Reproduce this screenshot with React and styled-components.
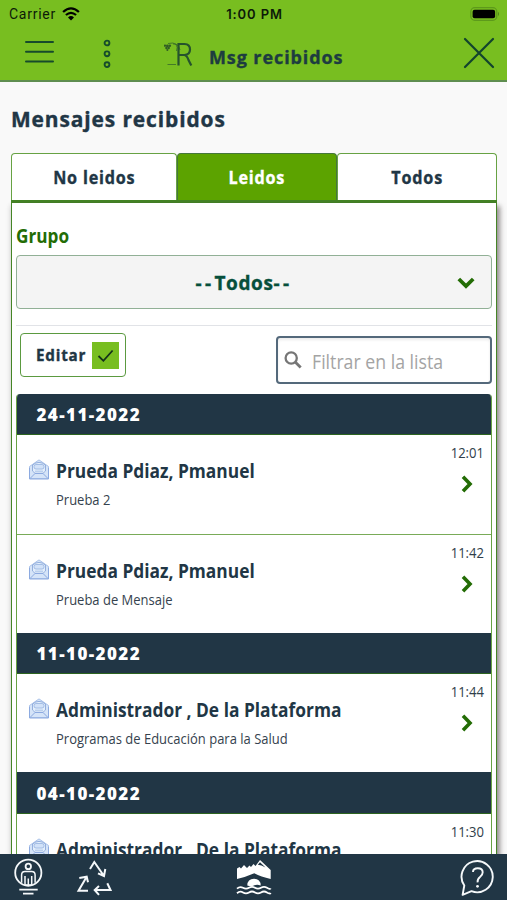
import React from "react";
import styled, { createGlobalStyle } from "styled-components";

const GlobalStyle = createGlobalStyle`
  * { box-sizing: border-box; }
  html, body { margin: 0; padding: 0; overflow: hidden; }
  body { font-family: "Open Sans", "Noto Sans", sans-serif; color: #213645; }
  button, input { font-family: inherit; color: inherit; margin: 0; }
`;

const Screen = styled.div`
  width: 507px;
  height: 900px;
  display: flex;
  flex-direction: column;
  overflow: hidden;
  background: #f9f9f9;
`;

/* Narrowed lettering, squeezed towards its starting edge */
const Narrow = styled.span`
  display: inline-block;
  white-space: nowrap;
  transform: scaleX(${(p) => p.$by});
  transform-origin: ${(p) => p.$from || "left"} center;
`;

const Header = styled.header`
  flex: none;
  height: 82px;
  background: #78be20;
  border-bottom: 2px solid #5f8e50;
`;

const StatusBar = styled.div`
  display: grid;
  grid-template-columns: 1fr auto 1fr;
  align-items: center;
  height: 28px;
  padding: 0 7px 0 9px;
  color: #0c1a08;
`;

const Carrier = styled.div`
  display: flex;
  align-items: center;
  gap: 6px;
  font-family: Roboto, sans-serif;
  font-size: 14px;
  letter-spacing: 0.75px;
`;

const Clock = styled.div`
  font-family: Inter, sans-serif;
  font-weight: 600;
  font-size: 13px;
  letter-spacing: 0.9px;
`;

const BatterySlot = styled.div`
  display: flex;
  justify-content: flex-end;
`;

const NavBar = styled.div`
  display: flex;
  align-items: center;
  height: 52px;
  padding: 0 11px 0 23px;
`;

const IconButton = styled.button`
  display: flex;
  padding: 0 0 ${(p) => p.$lift || "0"};
  border: 0;
  background: none;
  margin-left: ${(p) => p.$left || "0"};
`;

const Brand = styled.div`
  display: flex;
  align-items: center;
  margin-left: 53px;
  gap: 13px;
`;

const BrandTitle = styled.h1`
  margin: 5px 0 0;
  font-size: 18px;
  line-height: 24px;
  font-weight: 700;
  letter-spacing: 0.9px;
  -webkit-text-stroke: 0.35px;
  color: #1d3c40;
`;

const Content = styled.main`
  flex: 1;
  min-height: 0;
  overflow: hidden;
  padding: 0 10px 0 11px;
`;

const PageTitle = styled.h2`
  margin: 0;
  height: 71px;
  padding-top: 20px;
  font-size: 22px;
  line-height: 32px;
  font-weight: 700;
  letter-spacing: 0.95px;
  -webkit-text-stroke: 0.4px;
`;

const Tabs = styled.div`
  display: grid;
  grid-template-columns: 166px 160px 1fr;
  height: 50px;
  border-bottom: 3px solid #458526;
`;

const Tab = styled.button`
  border: 1.5px solid ${(p) => (p.$active ? "#45773a" : "#67a243")};
  border-bottom: 0;
  border-radius: 4px 4px 0 0;
  padding: 1px 0 0;
  background: ${(p) => (p.$active ? "#5ca300" : "#fff")};
  color: ${(p) => (p.$active ? "#fff" : "#213645")};
  font-size: 17px;
  font-weight: 700;
  letter-spacing: 0.85px;
  -webkit-text-stroke: 0.35px;
`;

const Panel = styled.section`
  height: 800px;
  padding: 18px 4px 0;
  background: #fff;
  border: solid #458526;
  border-width: 0 1.5px;
  box-shadow: 3px 3px 5px rgba(70, 60, 60, 0.55), -1px 2px 5px rgba(0, 0, 0, 0.1);
`;

const FieldLabel = styled.div`
  height: 34px;
  padding-top: 2px;
  font-size: 19px;
  line-height: 26px;
  font-weight: 700;
  color: #236c05;
`;

const SelectBox = styled.button`
  display: flex;
  align-items: center;
  width: 100%;
  height: 54px;
  padding: 1px 16px 0 14px;
  border: 1.5px solid #91b096;
  border-radius: 4px;
  background: #f4f4f4;
`;

const SelectValue = styled.span`
  flex: 1;
  text-align: center;
  font-size: 19px;
  font-weight: 700;
  letter-spacing: 0.6px;
  -webkit-text-stroke: 0.35px;
  color: #064f3b;
`;

const Dashes = styled.span`
  letter-spacing: 3.4px;
`;

const Tools = styled.div`
  display: flex;
  align-items: flex-start;
  justify-content: space-between;
  margin-top: 16px;
  height: 69px;
  padding: 7px 0 0 4px;
  border-top: 1.5px solid #e1e3e7;
`;

const EditButton = styled.button`
  display: flex;
  align-items: center;
  justify-content: space-between;
  width: 106px;
  height: 44px;
  padding: 0 6px 0 15px;
  border: 1.5px solid #5b9a40;
  border-radius: 4px;
  background: #fff;
  font-size: 16px;
  font-weight: 700;
  letter-spacing: 0.85px;
  -webkit-text-stroke: 0.35px;
`;

const CheckMark = styled.span`
  display: flex;
  width: 27px;
  height: 27px;
  margin-left: -6px;
  background: #78be20;
`;

const SearchField = styled.label`
  display: flex;
  align-items: center;
  width: 216px;
  height: 48px;
  margin-top: 3px;
  padding-left: 6px;
  gap: 10px;
  border: 2px solid #54697b;
  border-radius: 4px;
  background: #fff;
  box-shadow: inset 0 2px 3px rgba(0, 0, 0, 0.08);
`;

const SearchInput = styled.input`
  width: 170px;
  border: 0;
  padding: 2px 0 0;
  outline: 0;
  background: transparent;
  font-size: 20px;
  transform: scaleX(0.885);
  transform-origin: left center;
  &::placeholder { color: #a4a4a4; opacity: 1; }
`;

const MessageList = styled.div`
  border: solid #67a243;
  border-width: 0 1.5px;
  border-radius: 4px 4px 0 0;
  overflow: hidden;
`;

const DateHeader = styled.h3`
  margin: 0 -1.5px;
  height: 41.4px;
  padding: 1px 0 0 21px;
  display: flex;
  align-items: center;
  background: #213645;
  border-bottom: 1.5px solid #2d6420;
  color: #fff;
  font-size: 17px;
  font-weight: 800;
  letter-spacing: 1.4px;
`;

const Message = styled.article`
  display: grid;
  grid-template-columns: 22px 1fr 40px;
  column-gap: 5px;
  height: ${(p) => (p.$last ? "98px" : "99.6px")};
  padding: 9px 7px 0 12px;
  border-bottom: ${(p) => (p.$last ? "0" : "1.5px solid #79ab58")};
`;

const EnvelopeSlot = styled.div`
  padding-top: 15px;
  margin-left: -1px;
`;

const MessageBody = styled.div`
  padding-top: 14px;
  white-space: nowrap;
`;

const Sender = styled.div`
  font-size: 19px;
  line-height: 26px;
  font-weight: 700;
`;

const Subject = styled.div`
  margin-top: 6px;
  font-size: 14px;
  line-height: 20px;
  color: #35424e;
`;

const MessageMeta = styled.div`
  display: flex;
  flex-direction: column;
  align-items: flex-end;
`;

const Time = styled.time`
  font-size: 14.5px;
  line-height: 18px;
  color: #2f3e4a;
`;

const ChevronSlot = styled.div`
  margin: 13px 11px 0 0;
  display: flex;
`;

const Footer = styled.footer`
  flex: none;
  display: flex;
  align-items: flex-start;
  height: 46px;
  padding: 4px 12px 0 13px;
  background: #213645;
`;

const FooterItem = styled.button`
  display: flex;
  padding: 0;
  border: 0;
  background: none;
  margin-left: ${(p) => p.$left || "0"};
`;

const Wifi = () => (
  <svg width="18" height="14" viewBox="0 0 18 14">
    <path d="M1.1 5Q9-2.2 16.9 5" fill="none" stroke="#000" strokeWidth="2.3" />
    <path d="M3.9 8Q9 3.6 14.1 8" fill="none" stroke="#000" strokeWidth="2.2" />
    <path d="M6 10.4Q9 7.6 12 10.4L9 13.5Z" fill="#000" />
  </svg>
);

const Battery = () => (
  <svg width="31" height="14" viewBox="0 0 31 14">
    <rect x="1.8" y=".7" width="26" height="12.6" rx="4" fill="none" stroke="#5d9a1b" strokeWidth="1.3" />
    <rect x="3.6" y="2.7" width="22.5" height="8.6" rx="2" fill="#000" />
    <path d="M29 4.8Q31 7 29 9.2Z" fill="#4f8519" />
  </svg>
);

const Hamburger = () => (
  <svg width="32" height="26" viewBox="0 0 32 26" stroke="#164b2b" strokeWidth="2" strokeLinecap="round">
    <path d="M3 3H30M3 12.7H30M3 22.4H30" />
  </svg>
);

const Dots = () => (
  <svg width="8" height="30" viewBox="0 0 8 30" fill="none" stroke="#164b2b" strokeWidth="1.9">
    <circle cx="4" cy="4" r="2.4" />
    <circle cx="4" cy="14.8" r="2.4" />
    <circle cx="4" cy="25.6" r="2.4" />
  </svg>
);

const BrandLogo = () => (
  <svg width="32" height="26" viewBox="0 0 32 26" fill="none" stroke="#26532d">
    <path d="M14.5 24.5V3H20.5Q26 3.3 26 8.5T20.5 14H15M20.5 14Q23 14.5 24.5 19L27.3 24.5" strokeWidth="2.2" />
    <path d="M4 2.5Q10 1 12 3.5T12.5 10M9 3Q14.5 2 16 9M3.5 23.5H12" strokeWidth=".8" opacity=".8" />
    <g fill="#315d25" stroke="none">
      <circle cx="1" cy="4.6" r="1.2" /><circle cx="3.4" cy="4.9" r="1.4" />
      <circle cx="5.8" cy="4.7" r="1.3" /><circle cx="2.4" cy="7" r="1.2" />
      <circle cx="4.7" cy="7" r="1.2" /><circle cx="3.4" cy="9" r="1" />
    </g>
  </svg>
);

const Close = () => (
  <svg width="34" height="34" viewBox="0 0 34 34" stroke="#12442d" strokeWidth="2.2" strokeLinecap="round">
    <path d="M3 3L31 31M31 3L3 31" />
  </svg>
);

const ChevronDown = () => (
  <svg width="18" height="12" viewBox="0 0 18 12" fill="none" stroke="#236c05" strokeWidth="3.8">
    <path d="M1.8 2L9 9L16.2 2" />
  </svg>
);

const ChevronRight = () => (
  <svg width="12" height="18" viewBox="0 0 12 18" fill="none" stroke="#236c05" strokeWidth="3.6">
    <path d="M2 1.8L9 9L2 16.2" />
  </svg>
);

const Check = () => (
  <svg width="27" height="27" viewBox="0 0 27 27" fill="none" stroke="#143119" strokeWidth="1.8">
    <path d="M6.5 14L11.4 18.8L20.6 8.5" />
  </svg>
);

const Magnifier = () => (
  <svg width="18" height="18" viewBox="0 0 18 18" fill="none" stroke="#767676" strokeWidth="2.3">
    <circle cx="7.2" cy="7" r="5.6" />
    <path d="M11.2 11L16.7 16.5" strokeWidth="2.8" />
  </svg>
);

const Envelope = () => (
  <svg width="22" height="22" viewBox="0 0 22 22">
    <path d="M1.5 7.5L11 .9L20.5 7.5V19.5H1.5Z" fill="#d5e4f8" stroke="#a9c1e8" />
    <path d="M4.5 6Q11 .8 17.5 6V12L15 14.3H7L4.5 12Z" fill="#e3eefb" stroke="#8ca9da" strokeWidth=".9" />
    <rect x="6" y="5.5" width="10" height="4.5" rx="2" fill="#d2e2f8" stroke="#96b2e0" strokeWidth=".8" />
    <path d="M7 12.2H15" stroke="#a8c2e8" fill="none" />
    <path d="M1.5 9V20H20.5V9M2 19.5L7 14.5H15L20 19.5" fill="none" stroke="#8caae0" />
  </svg>
);

const Person = () => (
  <svg width="30" height="38" viewBox="0 0 30 38" fill="none" stroke="#f5f8fa" strokeWidth="1.8">
    <circle cx="15.3" cy="14.7" r="13.1" />
    <circle cx="15.3" cy="8.4" r="2.7" />
    <path d="M8.6 24.8V17Q8.6 13.5 12 13.5H18.7Q22.1 13.5 22.1 17V24.8M12 18V27H18.7V18M15.3 20.5V27" strokeWidth="1.5" />
    <path d="M6.3 31.7H24.7M10 35.7H20.5" />
  </svg>
);

const Recycle = () => (
  <svg width="36" height="38" viewBox="0 0 36 38" fill="none" stroke="#f5f8fa" strokeWidth="2">
    <path d="M14 11L18.3 4L28 18M29.3 11L28 18L22 15.3" />
    <path d="M12 32.7H2.5L10.7 18.7M3.3 20L10.7 18.7L12 24.3" />
    <path d="M31.3 25.3L34.5 32H18.7M23 28L18.7 32L23 36.8" />
  </svg>
);

const Mountain = () => (
  <svg width="37" height="38" viewBox="0 0 37 38">
    <path d="M2 21V10.5L4.5 9L6 10.5L9 7L12 10L14.5 7.5L16 9L18.5 6L20.5 8L25 2L35.7 12V21Q26 19 19.3 15.3Q11 19 2 21Z" fill="#fff" />
    <path d="M22.8 6.8L25 4.3L30.5 9.5L26.5 7.5Z" fill="#213645" />
    <path d="M12.3 27.5Q12.5 20.8 19 20.8T25.7 27.5Q22 26 19 27.5T12.3 27.5Z" fill="#fff" />
    <path d="M2 30.6Q5 28 8 29.8T14 29.8T20 29.8T26 29.8T32 29.8T35.7 30.4M2 35.2Q5 32.6 8 34.4T14 34.4T20 34.4T26 34.4T32 34.4T35.7 35" fill="none" stroke="#fff" strokeWidth="1.8" />
  </svg>
);

const Help = () => (
  <svg width="35" height="38" viewBox="0 0 35 38" fill="none" stroke="#f5f8fa" strokeWidth="1.9">
    <path d="M4.3 27.5A15.6 15.6 0 1 1 11.5 33.2L2.6 36.8Z" strokeLinejoin="round" />
    <path d="M13 14Q13 10.3 17.8 10.3T22.7 14.2Q22.7 17 20 19T17.6 24.3" />
    <circle cx="17.5" cy="28.3" r="1.4" fill="#f5f8fa" stroke="none" />
  </svg>
);

const groups = [
  {
    date: "24-11-2022",
    messages: [
      { sender: "Prueda Pdiaz, Pmanuel", subject: "Prueba 2", time: "12:01" },
      { sender: "Prueda Pdiaz, Pmanuel", subject: "Prueba de Mensaje", time: "11:42" },
    ],
  },
  {
    date: "11-10-2022",
    messages: [
      { sender: "Administrador , De la Plataforma", subject: "Programas de Educación para la Salud", time: "11:44" },
    ],
  },
  {
    date: "04-10-2022",
    messages: [{ sender: "Administrador , De la Plataforma", subject: "", time: "11:30" }],
  },
];

export default function App() {
  return (
    <Screen>
      <GlobalStyle />
      <Header>
        <StatusBar>
          <Carrier>Carrier <Wifi /></Carrier>
          <Clock>1:00 PM</Clock>
          <BatterySlot><Battery /></BatterySlot>
        </StatusBar>
        <NavBar>
          <IconButton $lift="4px" aria-label="Menú"><Hamburger /></IconButton>
          <IconButton $left="48px" aria-label="Opciones"><Dots /></IconButton>
          <Brand>
            <BrandLogo />
            <BrandTitle>Msg recibidos</BrandTitle>
          </Brand>
          <IconButton $left="auto" $lift="2px" aria-label="Cerrar"><Close /></IconButton>
        </NavBar>
      </Header>
      <Content>
        <PageTitle><Narrow $by={0.95}>Mensajes recibidos</Narrow></PageTitle>
        <Tabs>
          <Tab><Narrow $by={0.95} $from="center">No leidos</Narrow></Tab>
          <Tab $active><Narrow $by={0.95} $from="center">Leidos</Narrow></Tab>
          <Tab><Narrow $by={0.95} $from="center">Todos</Narrow></Tab>
        </Tabs>
        <Panel>
          <FieldLabel><Narrow $by={0.905}>Grupo</Narrow></FieldLabel>
          <SelectBox>
            <SelectValue><Dashes>--</Dashes>Todos<Dashes>--</Dashes></SelectValue>
            <ChevronDown />
          </SelectBox>
          <Tools>
            <EditButton>
              <Narrow $by={0.95}>Editar</Narrow>
              <CheckMark><Check /></CheckMark>
            </EditButton>
            <SearchField>
              <Magnifier />
              <SearchInput placeholder="Filtrar en la lista" />
            </SearchField>
          </Tools>
          <MessageList>
            {groups.map((group) => (
              <React.Fragment key={group.date}>
                <DateHeader>{group.date}</DateHeader>
                {group.messages.map((m, i) => (
                  <Message key={m.time} $last={i === group.messages.length - 1}>
                    <EnvelopeSlot><Envelope /></EnvelopeSlot>
                    <MessageBody>
                      <Sender><Narrow $by={0.913}>{m.sender}</Narrow></Sender>
                      <Subject><Narrow $by={0.928}>{m.subject}</Narrow></Subject>
                    </MessageBody>
                    <MessageMeta>
                      <Time><Narrow $by={0.9} $from="right">{m.time}</Narrow></Time>
                      <ChevronSlot><ChevronRight /></ChevronSlot>
                    </MessageMeta>
                  </Message>
                ))}
              </React.Fragment>
            ))}
          </MessageList>
        </Panel>
      </Content>
      <Footer>
        <FooterItem aria-label="Perfil"><Person /></FooterItem>
        <FooterItem $left="33px" aria-label="Reciclar"><Recycle /></FooterItem>
        <FooterItem $left="123px" aria-label="Inicio"><Mountain /></FooterItem>
        <FooterItem $left="auto" aria-label="Ayuda"><Help /></FooterItem>
      </Footer>
    </Screen>
  );
}
